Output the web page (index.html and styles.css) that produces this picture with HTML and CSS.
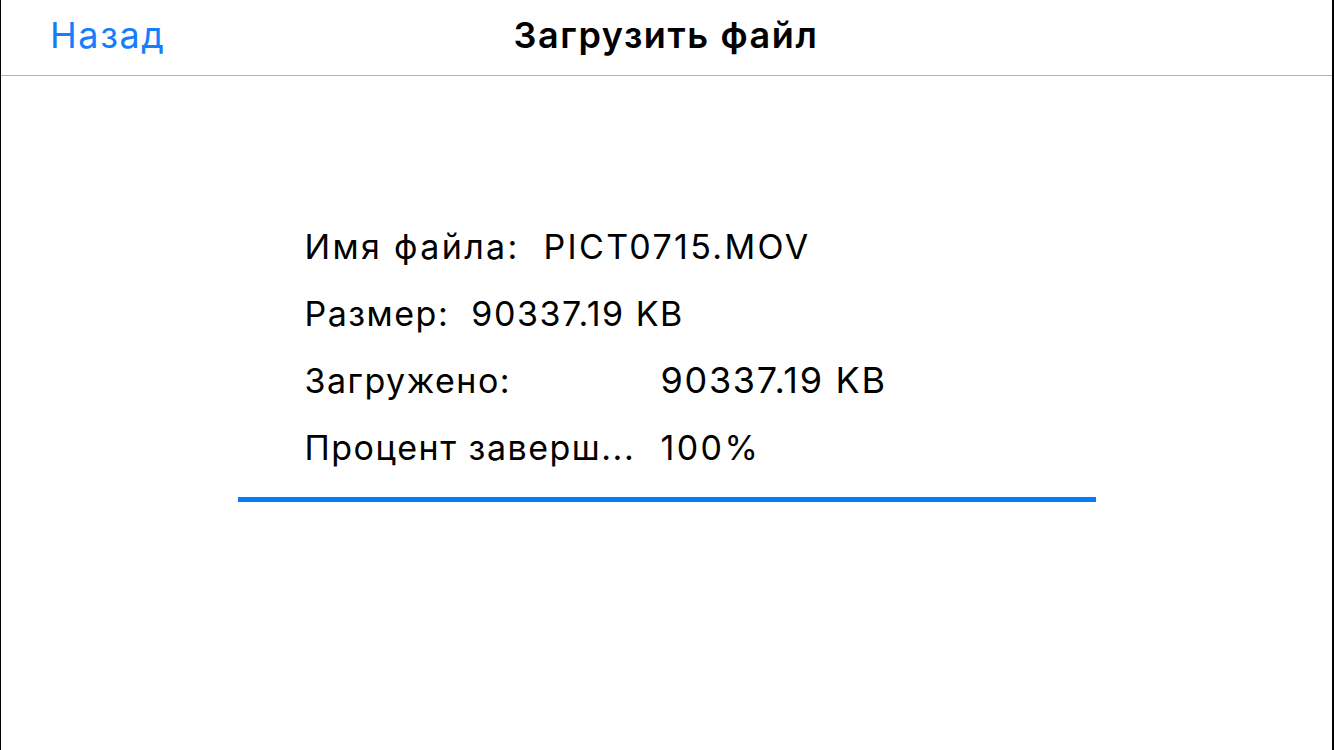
FILE: index.html
```html
<!DOCTYPE html>
<html lang="ru">
<head>
<meta charset="utf-8">
<title>Загрузить файл</title>
<link rel="stylesheet" href="styles.css">
</head>
<body>
<div class="screen">
  <header class="navbar">
    <a class="back">Назад</a>
    <h1 class="title">Загрузить файл</h1>
    <span class="spacer"></span>
  </header>
  <main class="content">
    <section class="panel">
      <div class="info">
        <div class="row name">Имя файла:&nbsp; PICT0715.MOV</div>
        <div class="row size">Размер:&nbsp; 90337.19 KB</div>
        <div class="row split"><span class="label">Загружено:</span><span class="value big">90337.19 KB</span></div>
        <div class="row split"><span class="label">Процент заверш...</span><span class="value">100%</span></div>
      </div>
      <div class="progress"><div class="fill" style="width:100%"></div></div>
    </section>
  </main>
</div>
</body>
</html>
```
FILE: styles.css
```css
html, body {
  margin: 0;
  padding: 0;
  background: #fff;
}
body {
  font-family: Inter, "Liberation Sans", sans-serif;
  color: #000;
}
.screen {
  box-sizing: border-box;
  width: 1334px;
  height: 750px;
  border-left: 1px solid #000;
  border-right: 2px solid #000;
  display: flex;
  flex-direction: column;
  background: #fff;
}
.navbar {
  box-sizing: border-box;
  height: 76px;
  border-bottom: 1px solid #b2b2b2;
  display: flex;
  align-items: center;
  justify-content: space-between;
  padding: 0 0 6px 49px;
}
.back {
  color: #147efb;
  font-size: 36px;
  width: 200px;
  letter-spacing: 1.6px;
}
.title {
  margin: 0;
  font-size: 36px;
  font-weight: 600;
  letter-spacing: 1.6px;
}
.spacer {
  width: 250px;
}
.content {
  flex: 1;
  display: flex;
  justify-content: center;
  padding-top: 137px;
}
.panel {
  width: 858px;
}
.info {
  padding-left: 67px;
}
.row {
  height: 67px;
  font-size: 34px;
  line-height: 67px;
  letter-spacing: 2px;
  white-space: nowrap;
  display: flex;
}
.row.name {
  letter-spacing: 2.35px;
}
.row.size {
  letter-spacing: 1.5px;
}
.label {
  width: 330px;
  margin-right: 26px;
  letter-spacing: 1.5px;
  white-space: nowrap;
}
.value {
  letter-spacing: 2.4px;
}
.value.big {
  font-size: 36px;
  letter-spacing: 1.7px;
}
.progress {
  height: 5px;
  margin-top: 16px;
  background: #e0e0e0;
}
.fill {
  height: 100%;
  background: #037aff;
}
```
